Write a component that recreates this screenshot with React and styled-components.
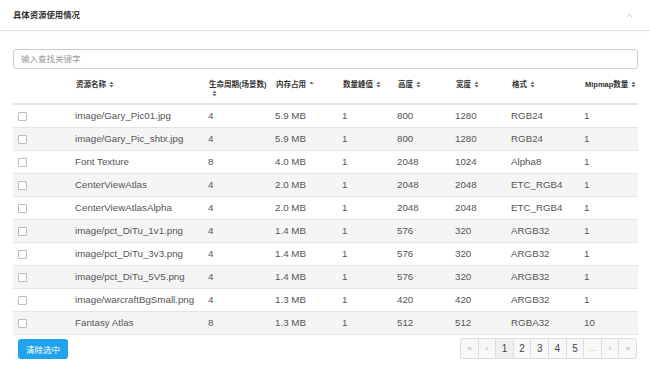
import React from 'react'
import styled, { createGlobalStyle } from 'styled-components'

const GlobalStyle = createGlobalStyle`
  body {
    margin: 0;
    background: #fff;
    font-family: "Liberation Sans", "Noto Sans CJK SC", sans-serif;
  }
`

const columns = [
  { key: 'check', width: 57 },
  { key: 'name', title: '资源名称', width: 133, sort: 'both' },
  { key: 'life', title: '生命周期(场景数)', width: 67, sort: 'both' },
  { key: 'mem', title: '内存占用', width: 67, sort: 'asc' },
  { key: 'count', title: '数量峰值', width: 55, sort: 'both' },
  { key: 'h', title: '高度', width: 58, sort: 'both' },
  { key: 'w', title: '宽度', width: 56, sort: 'both' },
  { key: 'fmt', title: '格式', width: 73, sort: 'both' },
  { key: 'mip', title: 'Mipmap数量', width: 59, sort: 'both' },
]

const rows = [
  ['image/Gary_Pic01.jpg', '4', '5.9 MB', '1', '800', '1280', 'RGB24', '1'],
  ['image/Gary_Pic_shtx.jpg', '4', '5.9 MB', '1', '800', '1280', 'RGB24', '1'],
  ['Font Texture', '8', '4.0 MB', '1', '2048', '1024', 'Alpha8', '1'],
  ['CenterViewAtlas', '4', '2.0 MB', '1', '2048', '2048', 'ETC_RGB4', '1'],
  ['CenterViewAtlasAlpha', '4', '2.0 MB', '1', '2048', '2048', 'ETC_RGB4', '1'],
  ['image/pct_DiTu_1v1.png', '4', '1.4 MB', '1', '576', '320', 'ARGB32', '1'],
  ['image/pct_DiTu_3v3.png', '4', '1.4 MB', '1', '576', '320', 'ARGB32', '1'],
  ['image/pct_DiTu_5V5.png', '4', '1.4 MB', '1', '576', '320', 'ARGB32', '1'],
  ['image/warcraftBgSmall.png', '4', '1.3 MB', '1', '420', '420', 'ARGB32', '1'],
  ['Fantasy Atlas', '8', '1.3 MB', '1', '512', '512', 'RGBA32', '10'],
]

const pages = [
  { label: '«', muted: true },
  { label: '‹', muted: true },
  { label: '1', active: true },
  { label: '2' },
  { label: '3' },
  { label: '4' },
  { label: '5' },
  { label: '…', muted: true },
  { label: '›', muted: true },
  { label: '»', muted: true },
]

function SortIcon({ dir }) {
  return (
    <SortSvg width="5" height="7" viewBox="0 0 5 7">
      <path d="M0.5 3 L2.5 0.6 L4.5 3 Z" fill="#666" />
      {dir === 'both' && <path d="M0.5 4 L2.5 6.4 L4.5 4 Z" fill="#666" />}
    </SortSvg>
  )
}

function App() {
  return (
    <>
      <GlobalStyle />
      <Panel>
        <PanelHeader>
          <Title>具体资源使用情况</Title>
          <svg width="7" height="5" viewBox="0 0 7 5">
            <path d="M1 4 L3.5 1.3 L6 4" fill="none" stroke="#c8c8c8" strokeWidth="1" />
          </svg>
        </PanelHeader>
        <Body>
          <Search placeholder="输入查找关键字" />
          <Table>
            <colgroup>
              {columns.map(c => <col key={c.key} style={{ width: c.width }} />)}
            </colgroup>
            <thead>
              <tr>
                {columns.map(c => (
                  <Th key={c.key}>
                    <HeadText>{c.title}</HeadText>
                    {c.sort && <SortIcon dir={c.sort} />}
                  </Th>
                ))}
              </tr>
            </thead>
            <tbody>
              {rows.map((r, i) => (
                <Row key={i} $striped={i % 2 === 1}>
                  <Td><Check /></Td>
                  {r.map((v, j) => <Td key={j}>{v}</Td>)}
                </Row>
              ))}
            </tbody>
          </Table>
          <Footer>
            <ClearButton>清除选中</ClearButton>
            <Pager>
              {pages.map((p, i) => (
                <PageItem key={i} $muted={p.muted} $active={p.active}>{p.label}</PageItem>
              ))}
            </Pager>
          </Footer>
        </Body>
      </Panel>
    </>
  )
}
export default App

const Panel = styled.div`
  width: 650px;
  height: 366px;
  background: #fff;
  overflow: hidden;
`

const PanelHeader = styled.div`
  height: 31px;
  box-sizing: border-box;
  padding: 0 17px 0 13px;
  display: flex;
  align-items: center;
  justify-content: space-between;
  border-bottom: 1px solid #e6e6e6;
  box-shadow: 0 1px 2px rgba(0, 0, 0, 0.04);
`

const Title = styled.div`
  font-size: 8.4px;
  font-weight: bold;
  color: #333;
  margin-top: -2px;
`

const Body = styled.div`
  padding: 18px 12px 0 13px;
`

const Search = styled.input`
  display: block;
  width: 100%;
  height: 20px;
  box-sizing: border-box;
  border: 1px solid #ccc;
  border-radius: 3px;
  padding: 0 7px;
  font-family: inherit;
  font-size: 8.5px;
  color: #555;
  outline: none;
  &::placeholder {
    color: #999;
  }
`

const Table = styled.table`
  width: 625px;
  margin-top: 5px;
  border-collapse: collapse;
  table-layout: fixed;
`

const Th = styled.th`
  text-align: left;
  vertical-align: top;
  padding: 6px 0 5px 6px;
  font-size: 7.5px;
  line-height: 9px;
  font-weight: bold;
  color: #333;
  height: 18px;
  border-bottom: 2px solid #e4e4e4;
`

const HeadText = styled.span`
  white-space: nowrap;
`

const SortSvg = styled.svg`
  margin-left: 3px;
  vertical-align: -0.5px;
`

const Row = styled.tr`
  height: 23px;
  background: ${p => (p.$striped ? '#f5f5f5' : '#fff')};
  border-bottom: 1px solid #e4e4e4;
`

const Td = styled.td`
  padding: 0 6px 0 5px;
  font-size: 9.75px;
  color: #555;
  white-space: nowrap;
  overflow: hidden;
`

const Check = styled.span`
  display: inline-block;
  width: 7px;
  height: 7px;
  border: 1px solid #bdbdbd;
  border-radius: 1px;
  background: #fff;
  vertical-align: middle;
`

const Footer = styled.div`
  display: flex;
  justify-content: space-between;
  align-items: flex-start;
  margin-top: 3px;
  padding-left: 5px;
  padding-right: 1px;
`

const ClearButton = styled.button`
  height: 20px;
  padding: 0 8px;
  margin-top: 1px;
  border: none;
  border-radius: 3px;
  background: #1fa3ee;
  color: #fff;
  font-family: inherit;
  font-size: 8.5px;
`

const Pager = styled.div`
  display: flex;
  border: 1px solid #ddd;
  border-radius: 2px;
  overflow: hidden;
`

const PageItem = styled.span`
  width: 16.6px;
  height: 19px;
  display: flex;
  align-items: center;
  justify-content: center;
  font-size: ${p => (p.$muted ? '8px' : '10px')};
  color: ${p => (p.$muted ? '#aaa' : '#444')};
  background: ${p => (p.$active ? '#efefef' : '#f8f8f8')};
  & + & {
    border-left: 1px solid #ddd;
  }
`
